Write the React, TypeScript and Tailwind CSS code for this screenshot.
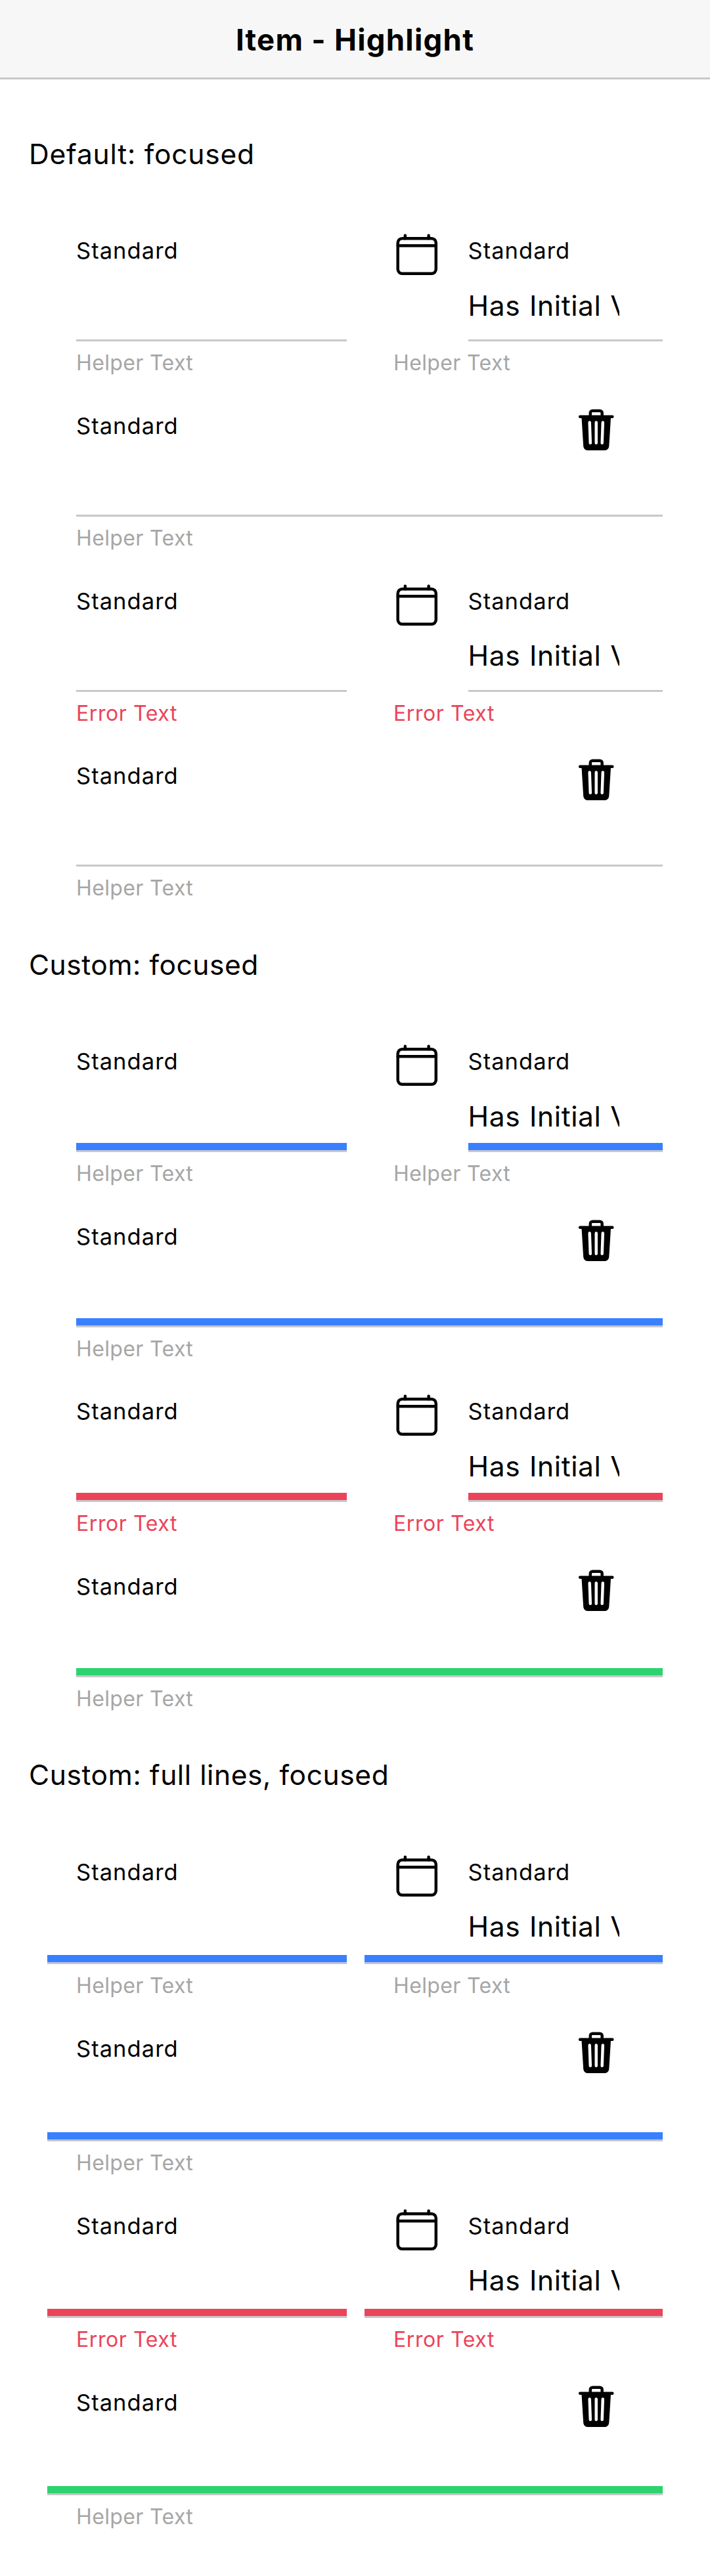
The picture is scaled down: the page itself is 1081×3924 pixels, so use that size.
type Tone = "none" | "blue" | "red" | "green";

const highlight: Record<Tone, string> = {
  none: "bg-transparent",
  blue: "bg-[#3880ff]",
  red: "bg-[#eb445a]",
  green: "bg-[#2dd36f]",
};

function CalendarIcon() {
  return (
    <svg viewBox="0 0 512 512" className="size-[71.5px] shrink-0" fill="none" stroke="currentColor" strokeWidth="32" strokeLinejoin="round" strokeLinecap="round">
      <rect x="48" y="80" width="416" height="384" rx="48" />
      <path d="M128 48v32M384 48v32M464 160H48" />
    </svg>
  );
}

function TrashIcon() {
  return (
    <svg viewBox="0 0 512 512" className="size-[71.5px] shrink-0" fill="currentColor">
      <path d="M432,96H336V72a40,40,0,0,0-40-40H216a40,40,0,0,0-40,40V96H80a16,16,0,0,0,0,32H97L116,432.92c1.42,26.85,22,47.08,48,47.08H348c26.13,0,46.3-19.78,48-47L415,128h17a16,16,0,0,0,0-32ZM192.57,416H192a16,16,0,0,1-16-15.43l-8-224a16,16,0,1,1,32-1.14l8,224A16,16,0,0,1,192.57,416ZM272,400a16,16,0,0,1-32,0V176a16,16,0,0,1,32,0ZM304,96H208V72a7.91,7.91,0,0,1,8-8h80a7.91,7.91,0,0,1,8,8Zm32,304.57A16,16,0,0,1,320,416h-.58A16,16,0,0,1,304,399.43l8-224a16,16,0,1,1,32,1.14Z" />
    </svg>
  );
}

interface ItemProps {
  tone: Tone;
  full?: boolean;
  error?: boolean;
  start?: boolean;
  end?: boolean;
  value?: string;
}

function Line({ tone }: { tone: Tone }) {
  return (
    <div className="border-b-3 border-[#c8c7cc]">
      <div className={`h-[11px] ${highlight[tone]}`} />
    </div>
  );
}

function Item({ tone, full, error, start, end, value }: ItemProps) {
  return (
    <div className="min-w-0">
      <div className={`flex flex-col ${full ? "h-[216px]" : "h-[213.25px]"}`}>
        <div className="flex min-h-0 flex-1 pl-11">
          {start && (
            <div className="w-[113.5px] shrink-0 pt-[45.25px]">
              <CalendarIcon />
            </div>
          )}
          <div className="flex min-w-0 flex-1 flex-col">
            <div className="flex min-h-0 flex-1">
              <div className="min-w-0 flex-1 pt-[54.25px]">
                <div className="text-[34.5px] leading-[42px] tracking-[1.05px]">Standard</div>
                {value && (
                  <div className="mt-[35.75px] mr-[66px] h-[54px] overflow-hidden text-[42.5px] leading-[54px] tracking-[0.64px] whitespace-nowrap [word-spacing:1px]">
                    {value}
                  </div>
                )}
              </div>
              {end && (
                <div className="mr-[66px] pt-[45.25px]">
                  <TrashIcon />
                </div>
              )}
            </div>
            {!full && <Line tone={tone} />}
          </div>
        </div>
        {full && <Line tone={tone} />}
      </div>
      <div className={`h-[53.5px] pt-[13px] pl-11 text-[32px] leading-10 ${error ? "tracking-[0.59px] text-[#eb445a]" : "tracking-[0.37px] text-[#a6a6a6]"}`}>
        {error ? "Error Text" : "Helper Text"}
      </div>
    </div>
  );
}

interface SectionProps {
  title: string;
  tracking: string;
  tones: [Tone, Tone, Tone];
  full?: boolean;
}

function Section({ title, tracking, tones, full }: SectionProps) {
  return (
    <section>
      <h2 className={`h-[167.75px] pt-[68.75px] pl-11 text-[42.5px] leading-[54px] ${tracking}`}>{title}</h2>
      <div className="grid grid-cols-[456px_454px] gap-x-[27px] pl-[72px]">
        <Item tone={tones[0]} full={full} />
        <Item tone={tones[0]} full={full} start value="Has Initial Value" />
        <div className="col-span-2">
          <Item tone={tones[0]} full={full} end />
        </div>
        <Item tone={tones[1]} full={full} error />
        <Item tone={tones[1]} full={full} error start value="Has Initial Value" />
        <div className="col-span-2">
          <Item tone={tones[2]} full={full} end />
        </div>
      </div>
    </section>
  );
}

export default function App() {
  return (
    <div className="h-[3924px] w-[1081px] overflow-hidden bg-white font-['Inter',sans-serif] text-black">
      <header className="flex h-[121px] items-center justify-center border-b-3 border-[#c8c8c8] bg-[#f7f7f7] pt-[3px]">
        <h1 className="text-[45.5px] leading-[56px] font-bold tracking-[1.27px]">Item - Highlight</h1>
      </header>
      <main className="pt-[18px]">
        <Section title="Default: focused" tracking="tracking-[0.8px]" tones={["none", "none", "none"]} />
        <Section title="Custom: focused" tracking="tracking-[0.55px]" tones={["blue", "red", "green"]} />
        <Section title="Custom: full lines, focused" tracking="tracking-[0.6px]" tones={["blue", "red", "green"]} full />
      </main>
    </div>
  );
}
